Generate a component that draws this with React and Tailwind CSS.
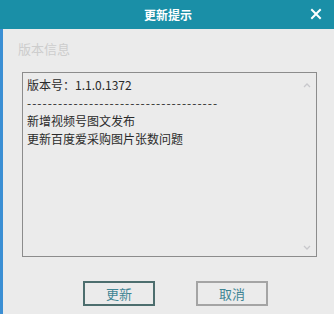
export default function App() {
  const font = { fontFamily: '"Noto Sans CJK SC", "Noto Sans", sans-serif' };
  return (
    <div className="w-[334px] h-[314px] bg-[#ebebeb] flex flex-col overflow-hidden" style={font}>
      <div className="h-[29px] bg-[#1a8fa7] flex items-center relative shrink-0">
        <div className="flex-1 text-center text-white text-[12px] font-bold pl-[2px] leading-none">更新提示</div>
        <div className="absolute right-[12px] top-[8px] text-white">
          <svg width="12" height="12" viewBox="0 0 12 12">
            <path d="M2 2 L10 10 M10 2 L2 10" stroke="white" strokeWidth="2" strokeLinecap="square" />
          </svg>
        </div>
      </div>
      <div className="flex-1 flex border-l-[3px] border-[#3b8fd4]">
        <div className="flex-1 flex flex-col pl-[14px] pr-[14px]">
          <div className="text-[13px] text-[#cdcdcd] pt-[11px] leading-[18px] pl-[1px]">版本信息</div>
          <div className="mt-[14px] ml-[5px] w-[295px] h-[185px] border border-[#8c8c8c] relative">
            <div className="pl-[4px] pt-[3px] text-[12px] leading-[18px] text-[#2a2a2a]">
              <div>版本号：1.1.0.1372</div>
              <div className="tracking-[1px]">-------------------------------------</div>
              <div>新增视频号图文发布</div>
              <div>更新百度爱采购图片张数问题</div>
            </div>
            <svg className="absolute right-[5px] top-[9px]" width="8" height="6" viewBox="0 0 8 6">
              <path d="M1 5 L4 2 L7 5" stroke="#c8c8cc" strokeWidth="1.3" fill="none" />
            </svg>
            <svg className="absolute right-[5px] bottom-[5px]" width="8" height="6" viewBox="0 0 8 6">
              <path d="M1 1 L4 4 L7 1" stroke="#c8c8cc" strokeWidth="1.3" fill="none" />
            </svg>
          </div>
          <div className="flex justify-center gap-[41px] mt-[24px] pl-[14px]">
            <button className="w-[72px] h-[25px] border-2 border-[#4d6e6e] text-[13px] text-[#3f8594] leading-none flex items-center justify-center">更新</button>
            <button className="w-[72px] h-[25px] border-2 border-[#a4a4a4] text-[13px] text-[#3f8594] leading-none flex items-center justify-center">取消</button>
          </div>
        </div>
      </div>
    </div>
  );
}
